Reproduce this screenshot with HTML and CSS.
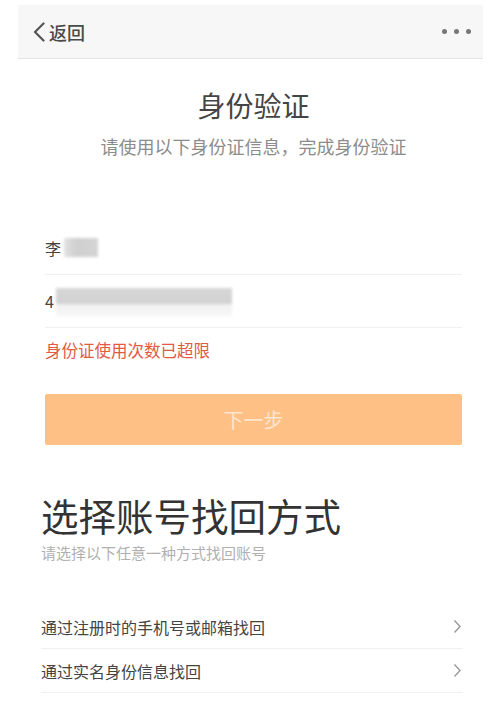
FILE: index.html
```html
<!DOCTYPE html>
<html lang="zh-CN">
<head>
<meta charset="utf-8">
<title>身份验证</title>
<link rel="stylesheet" href="styles.css">
</head>
<body>
<div class="nav">
  <div class="back">
    <svg class="back-icon" width="14" height="20" viewBox="0 0 14 20"><path d="M11.5 1.5 L3 10 L11.5 18.5" fill="none" stroke="#555" stroke-width="2.2" stroke-linecap="round" stroke-linejoin="round"/></svg>
    <span class="back-text">返回</span>
  </div>
  <div class="more"><i></i><i></i><i></i></div>
</div>

<div class="verify">
  <h1 class="title">身份验证</h1>
  <p class="subtitle">请使用以下身份证信息，完成身份验证</p>

  <div class="fields">
    <div class="field"><span class="val">李</span><span class="mask mask-name"></span></div>
    <div class="field"><span class="val">4</span><span class="mask mask-id"></span></div>
  </div>
  <p class="error">身份证使用次数已超限</p>
  <button class="next">下一步</button>
</div>

<div class="recover">
  <h2 class="rec-title">选择账号找回方式</h2>
  <p class="rec-sub">请选择以下任意一种方式找回账号</p>
  <ul class="options">
    <li class="option"><span>通过注册时的手机号或邮箱找回</span><svg class="arrow" width="9" height="15" viewBox="0 0 9 15"><path d="M1.5 1.5 L7 7.5 L1.5 13.5" fill="none" stroke="#999" stroke-width="1.4"/></svg></li>
    <li class="option"><span>通过实名身份信息找回</span><svg class="arrow" width="9" height="15" viewBox="0 0 9 15"><path d="M1.5 1.5 L7 7.5 L1.5 13.5" fill="none" stroke="#999" stroke-width="1.4"/></svg></li>
  </ul>
</div>
</body>
</html>
```

FILE: styles.css
```css
* { box-sizing: border-box; }
body {
  margin: 0;
  background: #fff;
  font-family: "Noto Sans CJK SC", "Noto Sans", sans-serif;
  color: #333;
}
.nav {
  margin: 5px 17px 0 18px;
  height: 54px;
  background: #f7f7f7;
  border-bottom: 1px solid #e4e4e4;
  display: flex;
  align-items: center;
  justify-content: space-between;
  padding: 0 12px 0 14px;
}
.back { display: flex; align-items: center; gap: 3px; }
.back-icon { display: block; }
.back-text { font-size: 18px; line-height: 1; color: #4a4a4a; font-weight: 500; }
.more { display: flex; gap: 7px; }
.more i { width: 5px; height: 5px; border-radius: 50%; background: #777; display: block; }

.verify { padding: 0 38px 0 45px; }
.title {
  margin: 30px 0 0;
  font-size: 28px;
  line-height: 32px;
  font-weight: 400;
  text-align: center;
  color: #444;
}
.subtitle {
  margin: 14px 0 0;
  font-size: 18px;
  line-height: 22px;
  text-align: center;
  color: #8c8c8c;
}
.fields { margin-top: 65px; }
.field {
  height: 53px;
  border-bottom: 1px solid #f0f0f0;
  display: flex;
  align-items: center;
  font-size: 16px;
  color: #444;
}
.mask {
  display: block;
  filter: blur(1.5px);
}
.mask-name {
  width: 34px; height: 19px; margin-left: 3px; margin-top: -2px;
  background: linear-gradient(90deg, #e2e2e2 0, #cfcfcf 35%, #d4d4d4 100%);
}
.mask-id {
  width: 176px; height: 28px; margin-left: 2px; margin-top: 2px;
  background: linear-gradient(180deg, #d6d6d6 0, #d2d2d2 55%, #f2f2f2 60%, #f6f6f6 100%);
}
.error {
  margin: 12px 0 0;
  font-size: 16.5px;
  line-height: 20px;
  color: #e25a44;
}
.next {
  display: block;
  width: 100%;
  height: 51px;
  margin-top: 34px;
  border: 0;
  border-radius: 2px;
  background: #fec084;
  color: #fde6cd;
  font-family: inherit;
  font-size: 20px;
}

.recover { padding: 0 37px 0 41px; }
.rec-title {
  margin: 48px 0 0;
  font-size: 37.5px;
  line-height: 44px;
  font-weight: 400;
  color: #333;
}
.rec-sub {
  margin: 6px 0 0;
  font-size: 15px;
  line-height: 20px;
  color: #b0b0b0;
}
.options { list-style: none; margin: 42px 0 0; padding: 0; }
.option {
  height: 44px;
  border-bottom: 1px solid #f0f0f0;
  display: flex;
  align-items: center;
  justify-content: space-between;
  font-size: 16px;
  color: #444;
  padding-right: 1px;
}
.arrow { display: block; }
```
